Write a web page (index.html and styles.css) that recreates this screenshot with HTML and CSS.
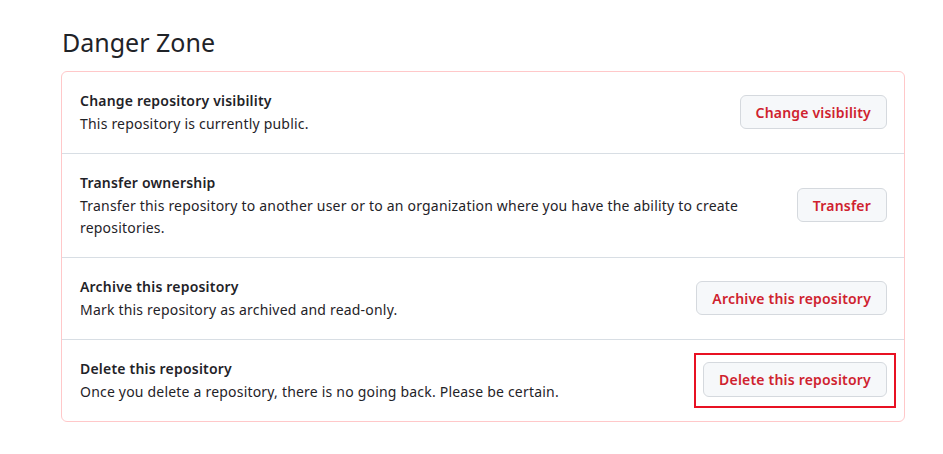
FILE: index.html
```html
<!DOCTYPE html>
<html lang="en">
  <head>
    <meta charset="UTF-8" />
    <title>Danger Zone</title>
    <link rel="stylesheet" href="styles.css">
  </head>
  <body>
    <div class="settings">
      <h2 class="section-title">Danger Zone</h2>

      <div class="danger-box">
        <div class="danger-item">
          <div class="item-text">
            <strong>Change repository visibility</strong>
            <p>This repository is currently public.</p>
          </div>
          <button class="btn-danger">Change visibility</button>
        </div>

        <div class="danger-item">
          <div class="item-text">
            <strong>Transfer ownership</strong>
            <p>Transfer this repository to another user or to an organization where you have the ability to create repositories.</p>
          </div>
          <button class="btn-danger">Transfer</button>
        </div>

        <div class="danger-item">
          <div class="item-text">
            <strong>Archive this repository</strong>
            <p>Mark this repository as archived and read-only.</p>
          </div>
          <button class="btn-danger">Archive this repository</button>
        </div>

        <div class="danger-item">
          <div class="item-text">
            <strong>Delete this repository</strong>
            <p>Once you delete a repository, there is no going back. Please be certain.</p>
          </div>
          <!-- highlighted for the screenshot -->
          <div class="highlight">
            <button class="btn-danger">Delete this repository</button>
          </div>
        </div>
      </div>
    </div>
  </body>
</html>
```

FILE: styles.css
```css
body {
  margin: 0;
  font-family: "Noto Sans", "Liberation Sans", sans-serif;
  color: #1f2328;
  background: #fff;
}

.settings {
  width: 844px;
  padding: 27px 0 0 61px;
}

.section-title {
  margin: 0 0 13px 1px;
  font-size: 25px;
  font-weight: 400;
  line-height: 31px;
}

.danger-box {
  border: 1px solid #ffc8c9;
  border-radius: 6px;
}

.danger-item {
  display: flex;
  align-items: center;
  justify-content: space-between;
  gap: 32px;
  padding: 17px 17px 18px 18px;
  border-top: 1px solid #d8dee4;
  font-size: 14px;
  letter-spacing: 0.2px;
}

.danger-item:first-child {
  border-top: none;
}

.item-text strong {
  display: block;
  font-weight: 600;
  line-height: 24px;
}

.item-text p {
  margin: 0;
  line-height: 22px;
}

.btn-danger {
  flex-shrink: 0;
  height: 34px;
  padding: 0 15px;
  font-family: inherit;
  font-size: 14px;
  font-weight: 600;
  letter-spacing: 0.2px;
  color: #cf222e;
  background: #f6f8fa;
  border: 1px solid #d5d9de;
  border-radius: 6px;
}

.highlight {
  flex-shrink: 0;
  margin: -9px -9px -10px 0;
  padding: 7px 7px 9px 7px;
  border: 2px solid #e81123;
}

.highlight .btn-danger {
  display: block;
  height: 35px;
}
```
